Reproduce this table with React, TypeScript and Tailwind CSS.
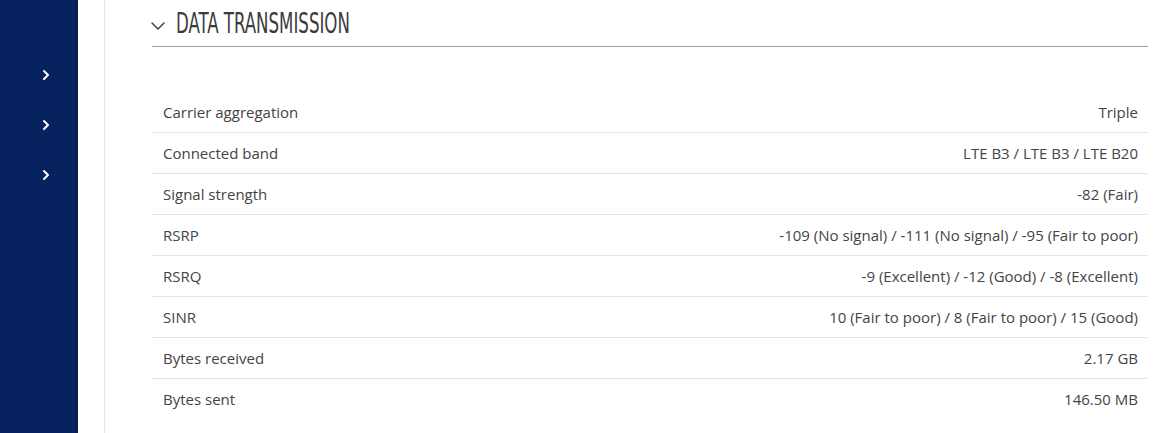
import { ChevronRight, ChevronDown } from 'lucide-react'

const rows: [string, string][] = [
  ['Carrier aggregation', 'Triple'],
  ['Connected band', 'LTE B3 / LTE B3 / LTE B20'],
  ['Signal strength', '-82 (Fair)'],
  ['RSRP', '-109 (No signal) / -111 (No signal) / -95 (Fair to poor)'],
  ['RSRQ', '-9 (Excellent) / -12 (Good) / -8 (Excellent)'],
  ['SINR', '10 (Fair to poor) / 8 (Fair to poor) / 15 (Good)'],
  ['Bytes received', '2.17 GB'],
  ['Bytes sent', '146.50 MB'],
]

export default function App() {
  return (
    <div className="flex h-[433px] w-[1163px] overflow-hidden bg-white font-['Open_Sans',sans-serif]">
      {/* Sidebar */}
      <div className="flex w-[78px] shrink-0 flex-col items-center gap-[34px] border-r-[3px] border-[#051d55] bg-[#06225f] pt-[67px] pl-[16px]">
        {[0, 1, 2].map((i) => (
          <ChevronRight key={i} className="h-4 w-4 text-white" strokeWidth={3} />
        ))}
      </div>

      <div className="w-[26px] shrink-0" />

      {/* Main */}
      <div className="flex-1 border-l border-[#e6e6e6] pl-[47px] pr-[15px]">
        <div className="flex h-[47px] items-center border-b border-[#a0a0a0] pt-[2px]">
          <ChevronDown className="-ml-[6px] mr-[6px] mt-[3px] h-[24px] w-[24px] text-[#444]" strokeWidth={1.5} />
          <h2 className="origin-left scale-x-[0.66] whitespace-nowrap font-['DejaVu_Sans_Condensed',sans-serif] text-[28px] leading-none text-[#3b3b3b]">
            DATA TRANSMISSION
          </h2>
        </div>

        <div className="mt-[45px]">
          {rows.map(([label, value], i) => (
            <div
              key={label}
              className={
                'flex h-[41px] items-center justify-between px-[11px] pr-[10px] text-[15px] text-[#444]' +
                (i < rows.length - 1 ? ' border-b border-[#e4e4e4]' : '')
              }
            >
              <span>{label}</span>
              <span>{value}</span>
            </div>
          ))}
        </div>
      </div>
    </div>
  )
}
